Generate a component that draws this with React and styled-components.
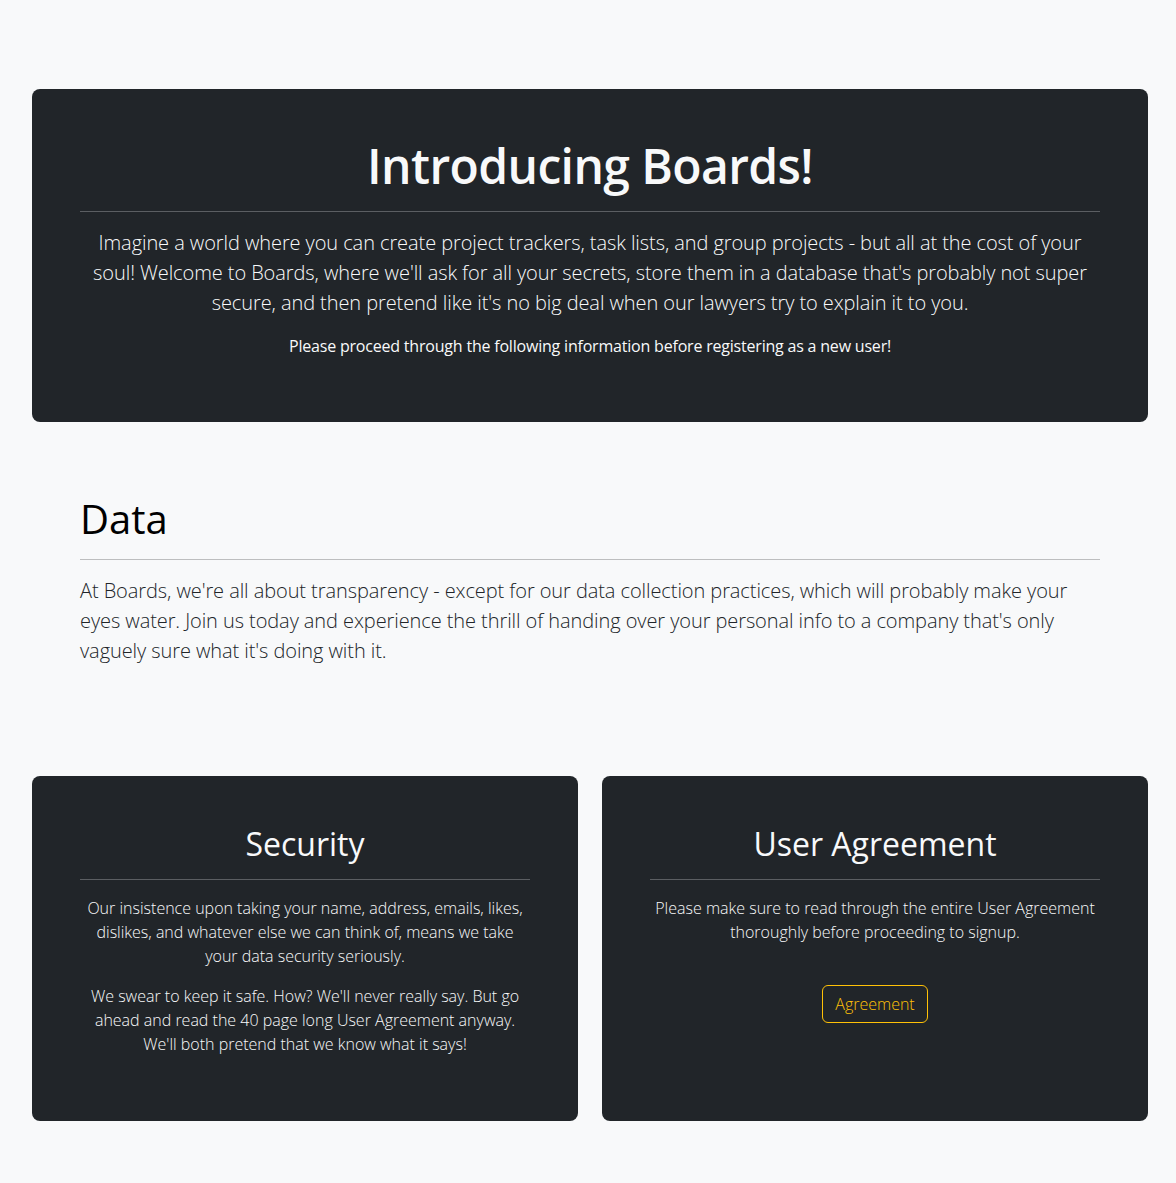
import React from "react";
import styled, { createGlobalStyle } from "styled-components";

const GlobalStyle = createGlobalStyle`
  *, *::before, *::after {
    box-sizing: border-box;
  }
  body {
    margin: 0;
    background-color: #f8f9fa;
    color: #212529;
    font-family: "Open Sans", "Noto Sans", sans-serif;
  }
`;

const Page = styled.main`
  width: 1116px;
  margin-left: 32px;
  padding-top: 89px;
  padding-bottom: 63px;
`;

const Hero = styled.section`
  background-color: #212529;
  color: #f8f9fa;
  border-radius: 8px;
  padding: 48px;
  text-align: center;
`;

const HeroTitle = styled.h1`
  margin: 0;
  font-size: 48px;
  line-height: 1.2;
  font-weight: 600;
  letter-spacing: -0.6px;
`;

const Rule = styled.hr`
  margin: 16px 0;
  border: 0;
  border-top: 1px solid ${(p) => (p.$dark ? "#5b5e62" : "#bdbebf")};
`;

const Lead = styled.p`
  margin: 0 0 16px;
  font-size: 20px;
  line-height: 30px;
  font-weight: 300;
  letter-spacing: -0.08px;
`;

const Note = styled.p`
  margin: 0 0 16px;
  font-size: 16px;
  line-height: 24px;
  font-weight: 400;
  letter-spacing: -0.2px;
`;

const DataSection = styled.section`
  margin-top: 73px;
  padding: 0 48px;
`;

const SectionTitle = styled.h2`
  margin: 0;
  font-size: 40px;
  line-height: 48px;
  font-weight: 400;
  color: #000;
`;

const Cards = styled.div`
  margin-top: 110px;
  display: grid;
  grid-template-columns: 1fr 1fr;
  gap: 24px;
`;

const Card = styled.article`
  background-color: #212529;
  color: #f8f9fa;
  border-radius: 8px;
  padding: 48px 48px 49px;
  text-align: center;
`;

const CardTitle = styled.h3`
  margin: 0;
  font-size: 32px;
  line-height: 39px;
  font-weight: 400;
`;

const CardText = styled.p`
  margin: 0 0 16px;
  font-size: 16px;
  line-height: 24px;
  font-weight: 300;
`;

const OutlineButton = styled.button`
  margin-top: 25px;
  padding: 6px 12px;
  font-family: inherit;
  font-size: 16px;
  line-height: 24px;
  font-weight: 300;
  color: #ffc107;
  background: transparent;
  border: 1px solid #ffc107;
  border-radius: 6px;
  cursor: pointer;
`;

export default function App() {
  return (
    <>
      <GlobalStyle />
      <Page>
        <Hero>
          <HeroTitle>Introducing Boards!</HeroTitle>
          <Rule $dark />
          <Lead>
            Imagine a world where you can create project trackers, task lists,
            and group projects - but all at the cost of your soul! Welcome to
            Boards, where we'll ask for all your secrets, store them in a
            database that's probably not super secure, and then pretend like
            it's no big deal when our lawyers try to explain it to you.
          </Lead>
          <Note>
            Please proceed through the following information before registering
            as a new user!
          </Note>
        </Hero>

        <DataSection>
          <SectionTitle>Data</SectionTitle>
          <Rule />
          <Lead>
            At Boards, we're all about transparency - except for our data
            collection practices, which will probably make your eyes water. Join
            us today and experience the thrill of handing over your personal
            info to a company that's only vaguely sure what it's doing with it.
          </Lead>
        </DataSection>

        <Cards>
          <Card>
            <CardTitle>Security</CardTitle>
            <Rule $dark />
            <CardText>
              Our insistence upon taking your name, address, emails, likes,
              dislikes, and whatever else we can think of, means we take your
              data security seriously.
            </CardText>
            <CardText>
              We swear to keep it safe. How? We'll never really say. But go
              ahead and read the 40 page long User Agreement anyway. We'll both
              pretend that we know what it says!
            </CardText>
          </Card>
          <Card>
            <CardTitle>User Agreement</CardTitle>
            <Rule $dark />
            <CardText>
              Please make sure to read through the entire User Agreement
              thoroughly before proceeding to signup.
            </CardText>
            <OutlineButton type="button">Agreement</OutlineButton>
          </Card>
        </Cards>
      </Page>
    </>
  );
}
